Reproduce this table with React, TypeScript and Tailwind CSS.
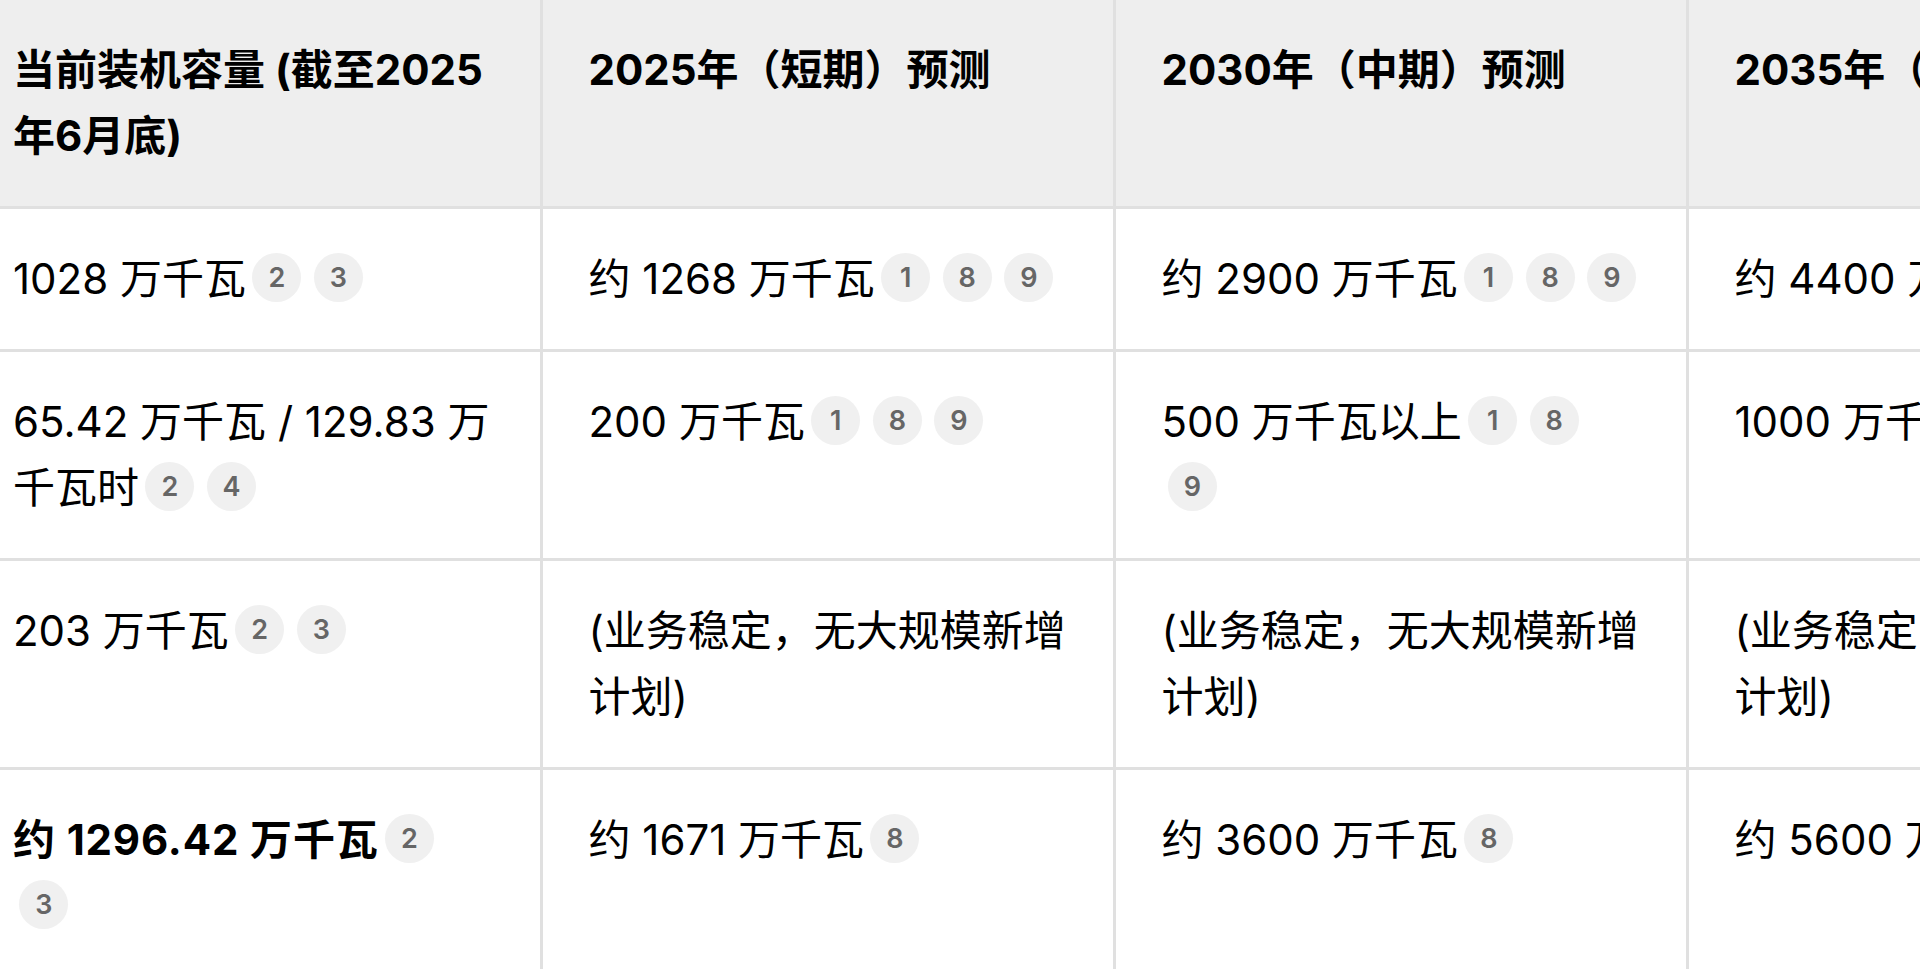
import type { ReactNode } from "react";

type Cell = { text: string; refs?: number[]; bold?: boolean };

const headers = [
  "当前装机容量 (截至2025年6月底)",
  "2025年（短期）预测",
  "2030年（中期）预测",
  "2035年（远期）预测",
];

const rows: Cell[][] = [
  [
    { text: "1028 万千瓦", refs: [2, 3] },
    { text: "约 1268 万千瓦", refs: [1, 8, 9] },
    { text: "约 2900 万千瓦", refs: [1, 8, 9] },
    { text: "约 4400 万千瓦", refs: [8, 9] },
  ],
  [
    { text: "65.42 万千瓦 / 129.83 万千瓦时", refs: [2, 4] },
    { text: "200 万千瓦", refs: [1, 8, 9] },
    { text: "500 万千瓦以上", refs: [1, 8, 9] },
    { text: "1000 万千瓦以上", refs: [8, 9] },
  ],
  [
    { text: "203 万千瓦", refs: [2, 3] },
    { text: "(业务稳定，无大规模新增计划)" },
    { text: "(业务稳定，无大规模新增计划)" },
    { text: "(业务稳定，无大规模新增计划)" },
  ],
  [
    { text: "约 1296.42 万千瓦", refs: [2, 3], bold: true },
    { text: "约 1671 万千瓦", refs: [8] },
    { text: "约 3600 万千瓦", refs: [8] },
    { text: "约 5600 万千瓦", refs: [8] },
  ],
];

function Ref({ n }: { n: number }) {
  return (
    <span className="relative -top-[5px] mx-[6.3px] inline-flex h-[49px] w-[49px] items-center justify-center rounded-full bg-[#f0f0f0] align-middle text-[27px] font-semibold leading-none text-[#666666]">
      {n}
    </span>
  );
}

function Td({ first, children }: { first: boolean; children: ReactNode }) {
  return (
    <td
      className={[
        "border-[3px] border-[#e0e0e0] py-[37px] align-top",
        first ? "border-l-0 pl-[13px] pr-[48px]" : "pl-[46px] pr-[42px]",
      ].join(" ")}
    >
      {children}
    </td>
  );
}

export default function App() {
  return (
    <div className="h-[969px] w-full overflow-hidden bg-white font-['Inter','Noto_Sans_CJK_SC',sans-serif] text-[42px] leading-[66px] text-black">
      <table className="-mt-[3px] w-[2260px] table-fixed border-collapse">
        <colgroup>
          <col className="w-[541px]" />
          <col className="w-[573px]" />
          <col className="w-[573px]" />
          <col className="w-[573px]" />
        </colgroup>
        <thead>
          <tr className="bg-[#eeeeee]">
            {headers.map((h, i) => (
              <th
                key={h}
                className={[
                  "border-[3px] border-[#e0e0e0] py-[37px] text-left align-top font-bold",
                  i === 0 ? "border-l-0 pl-[13px] pr-[48px]" : "pl-[46px] pr-[42px]",
                ].join(" ")}
              >
                {h}
              </th>
            ))}
          </tr>
        </thead>
        <tbody>
          {rows.map((row, r) => (
            <tr key={r}>
              {row.map((c, i) => (
                <Td key={i} first={i === 0}>
                  <span className={c.bold ? "font-bold tracking-[0.02em]" : ""}>{c.text}</span>
                  {c.refs?.map((n) => <Ref key={n} n={n} />)}
                </Td>
              ))}
            </tr>
          ))}
        </tbody>
      </table>
    </div>
  );
}
